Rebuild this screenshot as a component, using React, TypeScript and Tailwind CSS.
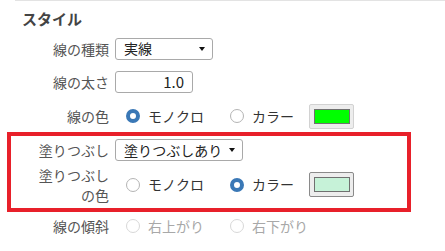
import { ReactNode } from "react"

const font = { fontFamily: '"Noto Sans CJK JP", "Liberation Sans", sans-serif' }

function Radio({ checked, disabled, label, width }: { checked?: boolean; disabled?: boolean; label: string; width: string }) {
    return (
        <div className={`flex items-center gap-[8px] ${width}`}>
            {checked ? (
                <span className="w-[14px] h-[14px] rounded-full border-[4px] border-[#3a78b6] bg-white" />
            ) : (
                <span className={`w-[14px] h-[14px] rounded-full border bg-white ${disabled ? "border-[#d8d8d8]" : "border-[#b4b4b4]"}`} />
            )}
            <span className={`text-[14px] ${disabled ? "text-[#a8a8a8]" : "text-[#333]"}`}>{label}</span>
        </div>
    )
}

function Swatch({ color, dark }: { color: string; dark?: boolean }) {
    return (
        <div className={`w-[45px] h-[25px] rounded-[2px] border bg-[#ededed] flex items-center justify-center ${dark ? "border-[#8a8a8a]" : "border-[#d2d2d2]"}`}>
            <div className="w-[36px] h-[15px] border border-[#707070]" style={{ backgroundColor: color }} />
        </div>
    )
}

function Select({ value, width }: { value: string; width: string }) {
    return (
        <div className={`${width} h-[22px] border border-[#a9a9a9] rounded-[3px] bg-white flex items-center justify-between pl-[8px] pr-[7px]`}>
            <span className="text-[14px] text-[#222]">{value}</span>
            <span className="w-0 h-0 border-l-[3px] border-r-[3px] border-t-[4px] border-l-transparent border-r-transparent border-t-[#111]" />
        </div>
    )
}

function Row({ label, labelWidth, height, children }: { label: ReactNode; labelWidth: string; height: string; children: ReactNode }) {
    return (
        <div className={`flex items-center ${height}`}>
            <div className={`${labelWidth} text-right text-[14px] leading-[20px] text-[#555]`}>{label}</div>
            <div className="flex items-center ml-[6px]">{children}</div>
        </div>
    )
}

export default function App() {
    return (
        <div className="w-[445px] h-[251px] bg-white overflow-hidden" style={font}>
            <div className="ml-[15px] border-t border-[#e3e3e3]" />
            <div className="pl-[22px] pt-[7px] h-[31px] text-[15px] leading-[22px] font-bold text-[#444]">スタイル</div>

            <Row label="線の種類" labelWidth="w-[109px]" height="h-[33px]">
                <Select value="実線" width="w-[98px]" />
            </Row>
            <Row label="線の太さ" labelWidth="w-[109px]" height="h-[34px]">
                <div className="w-[78px] h-[22px] border border-[#a9a9a9] rounded-[3px] bg-white flex items-center justify-end pr-[8px] text-[15px] text-[#222]">1.0</div>
            </Row>
            <Row label="線の色" labelWidth="w-[109px]" height="h-[34px]">
                <div className="flex items-center pl-[11px]">
                    <Radio checked label="モノクロ" width="w-[104px]" />
                    <Radio label="カラー" width="w-[79px]" />
                    <Swatch color="#00ff00" />
                </div>
            </Row>

            <div className="-mt-[1px] ml-[7px] w-[404px] border-[4px] border-[#e8202a]">
                <Row label="塗りつぶし" labelWidth="w-[98px]" height="h-[28px]">
                    <Select value="塗りつぶしあり" width="w-[128px]" />
                </Row>
                <Row label={<>塗りつぶし<br />の色</>} labelWidth="w-[98px]" height="h-[44px] pb-[3px]">
                    <div className="flex items-center pl-[11px]">
                        <Radio label="モノクロ" width="w-[104px]" />
                        <Radio checked label="カラー" width="w-[79px]" />
                        <Swatch color="#c6f2d8" dark />
                    </div>
                </Row>
            </div>

            <Row label="線の傾斜" labelWidth="w-[109px]" height="h-[28px]">
                <div className="flex items-center pl-[11px]">
                    <Radio disabled label="右上がり" width="w-[104px]" />
                    <Radio disabled label="右下がり" width="w-[79px]" />
                </div>
            </Row>
        </div>
    )
}
